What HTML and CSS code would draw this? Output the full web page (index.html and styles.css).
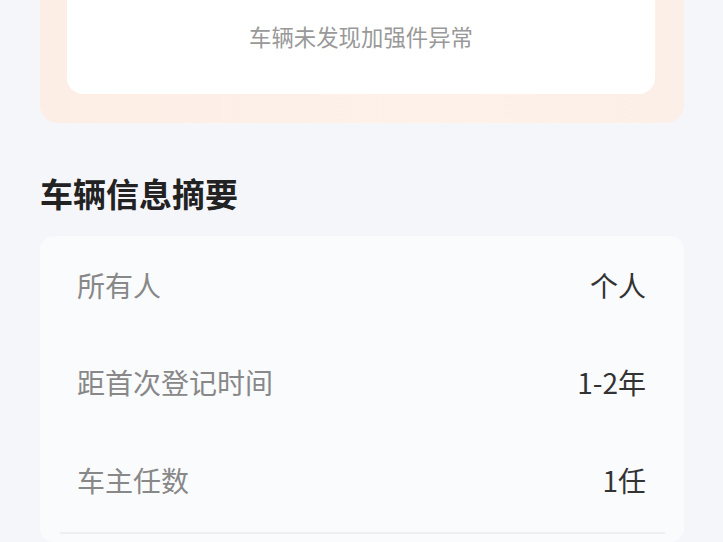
FILE: index.html
```html
<!DOCTYPE html>
<html lang="zh-CN">
<head>
  <meta charset="UTF-8" />
  <meta name="viewport" content="width=device-width, initial-scale=1.0" />
  <title>车辆信息</title>
  <link rel="stylesheet" href="styles.css">
</head>
<body>
  <div class="check-card">
    <div class="check-inner">
      <p class="check-note">车辆未发现加强件异常</p>
    </div>
  </div>

  <h2 class="section-title">车辆信息摘要</h2>
  <div class="info-card">
    <div class="info-row">
      <span class="info-label">所有人</span>
      <span class="info-value">个人</span>
    </div>
    <div class="info-row">
      <span class="info-label">距首次登记时间</span>
      <span class="info-value">1-2年</span>
    </div>
    <div class="info-row">
      <span class="info-label">车主任数</span>
      <span class="info-value">1任</span>
    </div>
    <div class="info-divider"></div>
  </div>
</body>
</html>
```

FILE: styles.css
```css
body {
  background-color: #f5f6fa;
  color: #222;
  font-family: "Noto Sans CJK SC", "Noto Sans", sans-serif;
  margin: 0;
  padding: 0 39px 0 40px;
}
.check-card {
  background: linear-gradient(90deg, #fdeee5, #fdf1ea 60%, #fcefe8);
  border-radius: 0 0 18px 18px;
  padding: 0 29px 29px 27px;
}
.check-inner {
  background-color: #fff;
  border-radius: 0 0 16px 16px;
  height: 94px;
  display: flex;
  justify-content: center;
}
.check-note {
  margin: 20px 0 0;
  font-size: 22.4px;
  line-height: 32px;
  color: #999;
}
.section-title {
  margin: 48px 0 0;
  font-size: 33px;
  line-height: 44px;
  font-weight: 700;
  color: #222;
}
.info-card {
  margin-top: 25px;
  background-color: #fafbfd;
  border-radius: 14px;
  padding: 0 0 8px;
}
.info-row {
  display: flex;
  justify-content: space-between;
  align-items: center;
  height: 97.5px;
  padding: 0 38px 0 37px;
  font-size: 28px;
}
.info-row:first-child {
  margin-top: -4px;
}
.info-label {
  color: #888;
}
.info-value {
  color: #333;
}
.info-divider {
  margin: 3px 19px 0 20px;
  height: 2px;
  background-color: #efeff2;
}
```
